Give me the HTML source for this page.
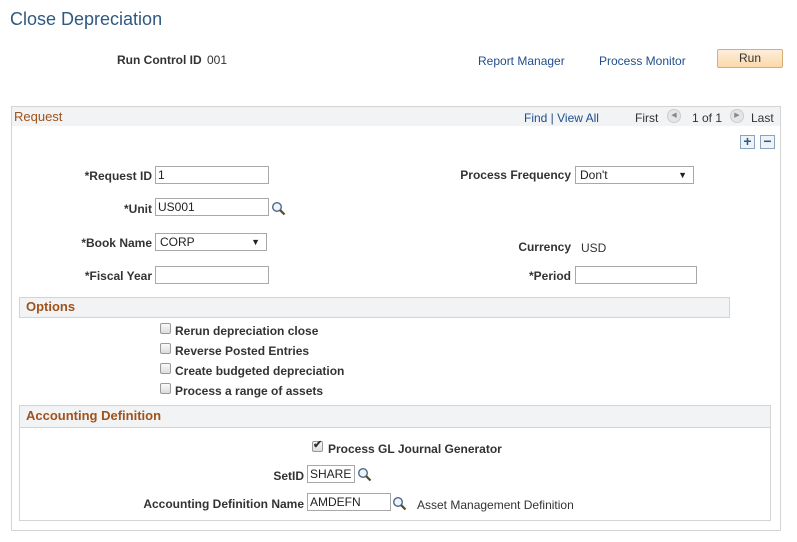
<!DOCTYPE html>
<html><head><style>
body{margin:0;width:797px;height:542px;background:#fff;font-family:"Liberation Sans",Arial,sans-serif;font-size:12px;color:#333;position:relative;overflow:hidden}
.a{position:absolute;white-space:nowrap}
.b{font-weight:bold}
.lbl{font-weight:bold;text-align:right}
.in{position:absolute;border:1px solid #a8a8a8;background:#fff;box-sizing:border-box;font-size:12px;padding:0 2px;line-height:16px;color:#222}
.sel:after{content:"▼";position:absolute;right:6px;top:0;font-size:9px}
.lnk{color:#1f4e8c}
.cb{position:absolute;width:11px;height:11px;border:1px solid #9a9a9a;border-radius:2px;background:linear-gradient(#fafafa,#dcdcdc);box-sizing:border-box}
.mag{position:absolute;width:16px;height:16px}
.hdr{color:#a0521b;font-weight:bold;font-size:13px}
</style></head><body>
<div class="a" style="left:10px;top:9px;font-size:18px;color:#305880">Close Depreciation</div>
<div class="a b" style="left:117px;top:53px">Run Control ID</div>
<div class="a" style="left:207px;top:53px">001</div>
<div class="a lnk" style="left:478px;top:54px">Report Manager</div>
<div class="a lnk" style="left:599px;top:54px">Process Monitor</div>
<div class="a" style="left:717px;top:49px;width:66px;height:19px;box-sizing:border-box;border:1px solid #d8ae73;border-radius:2px;background:linear-gradient(#fdeedb,#fbd9a8);text-align:center;line-height:17px">Run</div>

<div class="a" style="left:11px;top:106px;width:770px;height:425px;border:1px solid #d4d4d4;box-sizing:border-box"></div>
<div class="a" style="left:12px;top:107px;width:768px;height:19px;background:#f1f3f5"></div>
<div class="a" style="left:14px;top:109px;color:#a0521b;font-size:13px">Request</div>
<div class="a lnk" style="left:524px;top:111px">Find | View All</div>
<div class="a" style="left:635px;top:111px">First</div>
<div class="a" style="left:667px;top:109px;width:14px;height:14px;border-radius:50%;background:#e6e6e6;border:1px solid #ccc;box-sizing:border-box;font-size:7px;color:#888;text-align:center;line-height:12px">◀</div>
<div class="a" style="left:692px;top:111px">1 of 1</div>
<div class="a" style="left:730px;top:109px;width:14px;height:14px;border-radius:50%;background:#e6e6e6;border:1px solid #ccc;box-sizing:border-box;font-size:7px;color:#888;text-align:center;line-height:12px">▶</div>
<div class="a" style="left:751px;top:111px">Last</div>
<div class="a" style="left:740px;top:135px;width:15px;height:14px;border:1px solid #8aa4bf;box-sizing:border-box;background:#eef3f8;color:#2d5b8a;font-weight:bold;font-size:14px;line-height:11px;text-align:center">+</div>
<div class="a" style="left:760px;top:135px;width:15px;height:14px;border:1px solid #8aa4bf;box-sizing:border-box;background:#eef3f8;color:#2d5b8a;font-weight:bold;font-size:14px;line-height:11px;text-align:center">−</div>

<div class="a lbl" style="right:645px;top:169px">*Request ID</div>
<div class="in" style="left:155px;top:166px;width:114px;height:18px">1</div>
<div class="a lbl" style="right:645px;top:202px">*Unit</div>
<div class="in" style="left:155px;top:198px;width:114px;height:18px">US001</div>
<svg class="mag" style="left:271px;top:201px" viewBox="0 0 16 16"><circle cx="6" cy="6" r="4.3" fill="#eef4fa" stroke="#4a6a8a" stroke-width="1.4"/><path d="M9.2 9.2L13.5 13.5" stroke="#5a4a2a" stroke-width="2.2"/></svg>
<div class="a lbl" style="right:645px;top:236px">*Book Name</div>
<div class="in sel" style="left:155px;top:233px;width:112px;height:18px;padding-left:4px">CORP</div>
<div class="a lbl" style="right:645px;top:269px">*Fiscal Year</div>
<div class="in" style="left:155px;top:266px;width:114px;height:18px"></div>

<div class="a lbl" style="right:226px;top:168px">Process Frequency</div>
<div class="in sel" style="left:575px;top:166px;width:119px;height:18px;padding-left:4px">Don't</div>
<div class="a lbl" style="right:226px;top:240px">Currency</div>
<div class="a" style="left:581px;top:241px">USD</div>
<div class="a lbl" style="right:226px;top:269px">*Period</div>
<div class="in" style="left:575px;top:266px;width:122px;height:18px"></div>

<div class="a" style="left:19px;top:297px;width:711px;height:21px;border:1px solid #d4d4d4;box-sizing:border-box;background:#f1f3f5"></div>
<div class="a hdr" style="left:26px;top:299px">Options</div>
<div class="cb" style="left:160px;top:323px"></div><div class="a b" style="left:175px;top:324px">Rerun depreciation close</div>
<div class="cb" style="left:160px;top:343px"></div><div class="a b" style="left:175px;top:344px">Reverse Posted Entries</div>
<div class="cb" style="left:160px;top:363px"></div><div class="a b" style="left:175px;top:364px">Create budgeted depreciation</div>
<div class="cb" style="left:160px;top:383px"></div><div class="a b" style="left:175px;top:384px">Process a range of assets</div>

<div class="a" style="left:19px;top:405px;width:752px;height:116px;border:1px solid #d4d4d4;box-sizing:border-box"></div>
<div class="a" style="left:20px;top:406px;width:750px;height:21px;background:#f1f3f5;border-bottom:1px solid #d4d4d4"></div>
<div class="a hdr" style="left:26px;top:408px">Accounting Definition</div>
<div class="cb" style="left:312px;top:441px"></div><div class="a" style="left:313px;top:438px;font-size:11px;font-weight:bold">✔</div>
<div class="a b" style="left:328px;top:442px">Process GL Journal Generator</div>
<div class="a lbl" style="right:493px;top:469px">SetID</div>
<div class="in" style="left:307px;top:465px;width:48px;height:18px">SHARE</div>
<svg class="mag" style="left:357px;top:467px" viewBox="0 0 16 16"><circle cx="6" cy="6" r="4.3" fill="#eef4fa" stroke="#4a6a8a" stroke-width="1.4"/><path d="M9.2 9.2L13.5 13.5" stroke="#5a4a2a" stroke-width="2.2"/></svg>
<div class="a lbl" style="right:493px;top:497px">Accounting Definition Name</div>
<div class="in" style="left:307px;top:493px;width:84px;height:18px">AMDEFN</div>
<svg class="mag" style="left:392px;top:496px" viewBox="0 0 16 16"><circle cx="6" cy="6" r="4.3" fill="#eef4fa" stroke="#4a6a8a" stroke-width="1.4"/><path d="M9.2 9.2L13.5 13.5" stroke="#5a4a2a" stroke-width="2.2"/></svg>
<div class="a" style="left:417px;top:498px">Asset Management Definition</div>
</body></html>
